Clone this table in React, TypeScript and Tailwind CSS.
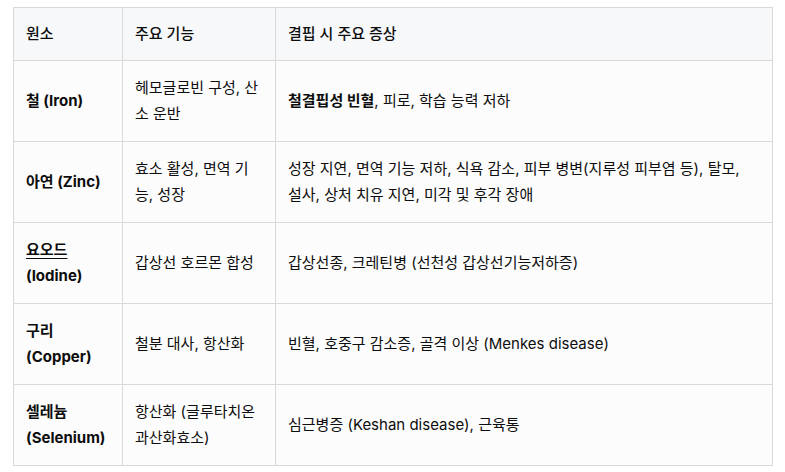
import React from 'react';

type Row = {
    element: React.ReactNode;
    role: string;
    symptoms: React.ReactNode;
};

const rows: Row[] = [
    {
        element: '철 (Iron)',
        role: '헤모글로빈 구성, 산소 운반',
        symptoms: (
            <>
                <strong className="font-bold">철결핍성 빈혈</strong>, 피로, 학습 능력 저하
            </>
        ),
    },
    {
        element: '아연 (Zinc)',
        role: '효소 활성, 면역 기능, 성장',
        symptoms: '성장 지연, 면역 기능 저하, 식욕 감소, 피부 병변(지루성 피부염 등), 탈모, 설사, 상처 치유 지연, 미각 및 후각 장애',
    },
    {
        element: (
            <>
                <span className="underline decoration-1 underline-offset-[3px]">요오드</span> (Iodine)
            </>
        ),
        role: '갑상선 호르몬 합성',
        symptoms: '갑상선종, 크레틴병 (선천성 갑상선기능저하증)',
    },
    {
        element: '구리 (Copper)',
        role: '철분 대사, 항산화',
        symptoms: '빈혈, 호중구 감소증, 골격 이상 (Menkes disease)',
    },
    {
        element: '셀레늄 (Selenium)',
        role: '항산화 (글루타치온 과산화효소)',
        symptoms: '심근병증 (Keshan disease), 근육통',
    },
];

const App: React.FC = () => {
    return (
        <div
            className="min-h-screen bg-white pl-[13px] pt-[7px] text-[15px] leading-[26.5px] text-[#0d0d0d]"
            style={{ fontFamily: 'Inter, "Noto Sans CJK KR", sans-serif' }}
        >
            <table className="w-[759px] table-fixed border-collapse border border-[#d9d9d9]">
                <colgroup>
                    <col className="w-[109px]" />
                    <col className="w-[153px]" />
                    <col className="w-[497px]" />
                </colgroup>
                <thead>
                    <tr className="h-[53px] bg-[#f7f8fa]">
                        <th className="border border-[#d9d9d9] px-3 text-left align-middle font-medium">원소</th>
                        <th className="border border-[#d9d9d9] px-3 text-left align-middle font-medium">주요 기능</th>
                        <th className="border border-[#d9d9d9] pl-3 pr-5 text-left align-middle font-medium">결핍 시 주요 증상</th>
                    </tr>
                </thead>
                <tbody>
                    {rows.map((row, i) => (
                        <tr key={i} className="h-[81px] bg-[#fcfcfc]">
                            <td className="border border-[#d9d9d9] px-3 align-middle font-bold">{row.element}</td>
                            <td className="border border-[#d9d9d9] px-3 align-middle">{row.role}</td>
                            <td className="border border-[#d9d9d9] pl-3 pr-5 align-middle">{row.symptoms}</td>
                        </tr>
                    ))}
                </tbody>
            </table>
        </div>
    );
};

export default App;
